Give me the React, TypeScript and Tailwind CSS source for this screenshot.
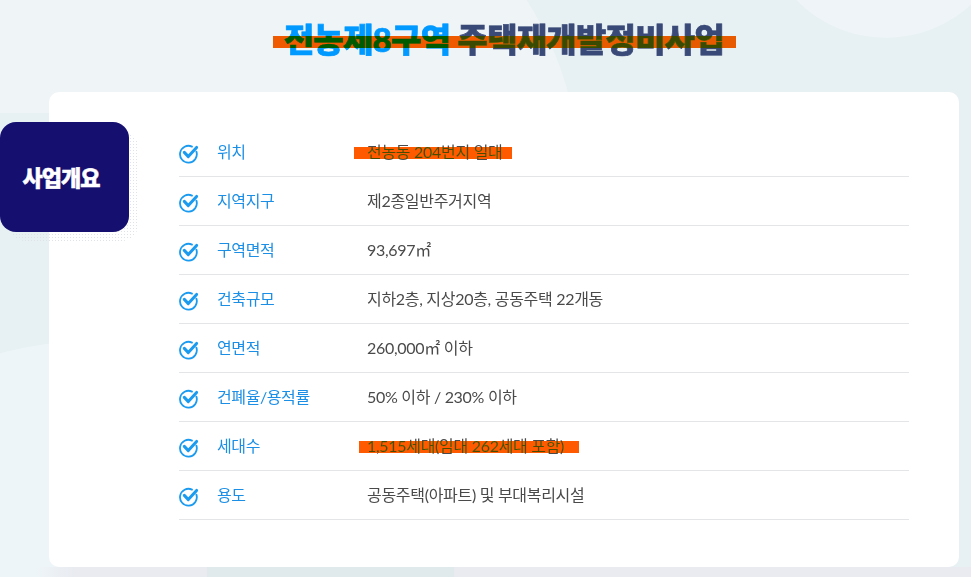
const rows = [
  { label: "위치", value: "전농동 204번지 일대", mark: "-left-[13px] w-[158px]" },
  { label: "지역지구", value: "제2종일반주거지역" },
  { label: "구역면적", value: "93,697㎡" },
  { label: "건축규모", value: "지하2층, 지상20층, 공동주택 22개동" },
  { label: "연면적", value: "260,000㎡ 이하" },
  { label: "건폐율/용적률", value: "50% 이하 / 230% 이하" },
  { label: "세대수", value: "1,515세대(임대 262세대 포함)", mark: "-left-[8px] w-[220px]" },
  { label: "용도", value: "공동주택(아파트) 및 부대복리시설" },
];

function CheckIcon() {
  return (
    <svg width="20" height="20" viewBox="0 0 20 20" fill="none" className="mt-[3px] shrink-0">
      <path d="M17.4 7.6A8.4 8.4 0 1 1 13 2.6" stroke="#1b9bf0" strokeWidth="1.8" strokeLinecap="round" />
      <path
        d="M5.3 8.4L9.3 12.6L17.6 3.4"
        stroke="#1b9bf0"
        strokeWidth="3"
        strokeLinecap="round"
        strokeLinejoin="round"
      />
    </svg>
  );
}

export default function App() {
  return (
    <div className="relative h-[577px] w-[971px] overflow-hidden bg-[#e7f0f2] font-['Lato','Noto_Sans_CJK_KR',sans-serif]">
      {/* background blobs */}
      <div className="absolute top-[-212px] right-[-40px] h-[250px] w-[250px] rounded-full bg-[#eef4f7]" />
      <div className="absolute top-[-150px] left-[-80px] h-[660px] w-[660px] rounded-full bg-[#eff4f7]" />
      <div className="absolute top-[113px] left-[-100px] h-[320px] w-[400px] rounded-[40px] bg-[#e7f0f2]" />
      <div className="absolute top-[338px] left-[-377px] h-[1000px] w-[1000px] rounded-full bg-[#eef5f8]" />
      <div className="absolute right-0 bottom-0 left-0 h-[10px] bg-[linear-gradient(to_right,#eef5f8_35px,#e9ebf1_75px,#e9ebf1_207px,#e0eaec_207px,#e0eaec_454px,#e9ebf1_454px)]" />

      <div className="relative ml-[49px] flex w-[910px] flex-col items-center pt-[15px]">
        <div className="relative h-[48px]">
          <h1 className="text-[33px] leading-[48px] font-black tracking-[-0.75px] whitespace-nowrap text-[#3a4a78] [-webkit-text-stroke:0.7px_currentColor]">
            <span className="text-[#0099ff]">전농제8구역</span> 주택재개발정비사업
          </h1>
          <div className="absolute top-[21px] right-[-12px] left-[-11px] h-[12px] bg-[#ff5a00] mix-blend-darken" />
        </div>

        <div className="mt-[29px] h-[475px] w-full rounded-[10px] bg-white pt-[36px] pr-[50px] pl-[130px]">
          <ul>
            {rows.map((r) => (
              <li key={r.label} className="flex h-[49px] items-center border-b border-[#e3e5e7]">
                <CheckIcon />
                <span className="ml-[18px] w-[150px] text-[16px] tracking-[-0.4px] text-[#1b8fe6]">{r.label}</span>
                <span className="relative text-[16px] tracking-[-0.3px] whitespace-nowrap text-[#4a4a4a]">
                  {r.value}
                  {r.mark && (
                    <span className={`absolute top-[7px] h-[12px] bg-[#ff5a00] mix-blend-darken ${r.mark}`} />
                  )}
                </span>
              </li>
            ))}
          </ul>
        </div>
      </div>

      <div className="absolute top-[131px] left-[9px] h-[110px] w-[129px] rounded-[16px] bg-[radial-gradient(#dfe3e7_0.7px,transparent_0.9px)] bg-[length:3px_3px]" />
      <div className="absolute top-[122px] left-0 flex h-[110px] w-[129px] items-center justify-center rounded-[16px] bg-[#150f70] pr-[7px]">
        <span className="text-[22px] font-black tracking-[-1px] text-white [-webkit-text-stroke:0.5px_currentColor]">
          사업개요
        </span>
      </div>
    </div>
  );
}
